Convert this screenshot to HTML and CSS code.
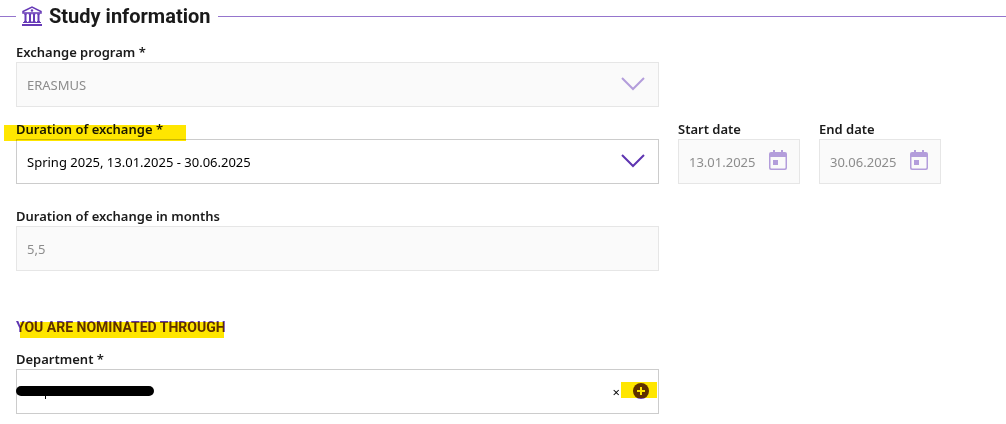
FILE: index.html
```html
<!DOCTYPE html>
<html lang="en">
<head>
    <meta charset="UTF-8">
    <meta name="viewport" content="width=device-width, initial-scale=1.0">
    <title>Study information</title>
    <link rel="stylesheet" href="styles.css">
</head>
<body>
    <header class="section-header">
        <svg class="section-icon" viewBox="0 0 20 20" aria-hidden="true">
            <path d="M1 5.500 10 1l9 4.500V7H1z" fill="none" stroke="currentColor" stroke-width="1.500"/>
            <circle cx="10" cy="4.500" r="1.200"/>
            <path d="M2 7.500h3v1h-.5V15H5v1H2v-1h.5V8.500H2zM6.500 7.500h3v1H9V15h.5v1h-3v-1H7V8.500h-.5zM10.500 7.500h3v1H13V15h.5v1h-3v-1h.5V8.500h-.5zM15 7.500h3v1h-.5V15h.5v1h-3v-1h.5V8.500H15z"/>
            <path d="M1 16h18v1H1zM0 18h20v2H0z"/>
        </svg>
        <h1>Study information</h1>
    </header>

    <form class="study-form">
        <div class="field program">
            <label for="program">Exchange program *</label>
            <div class="control disabled">
                <select id="program" disabled>
                    <option>ERASMUS</option>
                </select>
                <svg class="chevron" viewBox="0 0 24 14" aria-hidden="true"><path d="M1 1l11 11L23 1"/></svg>
            </div>
        </div>

        <div class="field duration">
            <label for="duration" class="marked marked-label">Duration of exchange *</label>
            <div class="control">
                <select id="duration">
                    <option>Spring 2025, 13.01.2025 - 30.06.2025</option>
                </select>
                <svg class="chevron" viewBox="0 0 24 14" aria-hidden="true"><path d="M1 1l11 11L23 1"/></svg>
            </div>
        </div>
        <div class="field">
            <label for="start-date">Start date</label>
            <div class="control disabled">
                <input type="text" id="start-date" class="date" value="13.01.2025" disabled>
                <button type="button" class="calendar" aria-label="Choose start date" disabled>
                    <svg viewBox="0 0 18 20" aria-hidden="true">
                        <path fill-rule="evenodd" d="M4 0h2v2h6V0h2v2h2a2 2 0 0 1 2 2v14a2 2 0 0 1-2 2H2a2 2 0 0 1-2-2V4a2 2 0 0 1 2-2h2zM1.500 7v10.500a1 1 0 0 0 1 1h13a1 1 0 0 0 1-1V7z"/>
                        <path d="M4 10h5v5H4z"/>
                    </svg>
                </button>
            </div>
        </div>
        <div class="field">
            <label for="end-date">End date</label>
            <div class="control disabled">
                <input type="text" id="end-date" class="date" value="30.06.2025" disabled>
                <button type="button" class="calendar" aria-label="Choose end date" disabled>
                    <svg viewBox="0 0 18 20" aria-hidden="true">
                        <path fill-rule="evenodd" d="M4 0h2v2h6V0h2v2h2a2 2 0 0 1 2 2v14a2 2 0 0 1-2 2H2a2 2 0 0 1-2-2V4a2 2 0 0 1 2-2h2zM1.500 7v10.500a1 1 0 0 0 1 1h13a1 1 0 0 0 1-1V7z"/>
                        <path d="M4 10h5v5H4z"/>
                    </svg>
                </button>
            </div>
        </div>

        <div class="field months">
            <label for="months">Duration of exchange in months</label>
            <div class="control disabled">
                <input type="text" id="months" value="5,5" disabled>
            </div>
        </div>

        <h2><span class="marked marked-heading">YOU ARE NOMINATED THROUGH</span></h2>

        <div class="field department">
            <label for="department">Department *</label>
            <div class="control">
                <input type="text" id="department">
                <span class="redacted"></span>
                <button type="button" class="clear" aria-label="Clear department">×</button>
                <button type="button" class="add marked marked-add" aria-label="Add department">
                    <svg viewBox="0 0 16 16" aria-hidden="true">
                        <circle cx="8" cy="8" r="8"/>
                        <path d="M8 4v8M4 8h8" stroke="#fff" stroke-width="2"/>
                    </svg>
                </button>
            </div>
        </div>
    </form>
</body>
</html>
```

FILE: styles.css
```css
* {
    box-sizing: border-box;
}
body {
    margin: 0;
    background-color: #fff;
    color: #1a1a1a;
    font-family: "Noto Sans", "Open Sans", sans-serif;
    font-size: 13px;
    line-height: 20px;
}
h1, h2 {
    margin: 0;
    font-family: Roboto, "Liberation Sans", sans-serif;
    font-weight: bold;
}
.section-header {
    display: flex;
    align-items: center;
    height: 32px;
}
.section-header::before,
.section-header::after {
    content: "";
    height: 1px;
    background-color: #9575cd;
}
.section-header::before {
    width: 16px;
    margin-right: 6px;
}
.section-header::after {
    flex: 1;
    margin-left: 8px;
}
.section-header h1 {
    margin-left: 7px;
    font-size: 20px;
}
.section-icon {
    width: 20px;
    height: 20px;
    color: #673ab7;
    fill: #673ab7;
}
.study-form {
    display: grid;
    grid-template-columns: minmax(0, 1fr) 122px 122px;
    column-gap: 19px;
    row-gap: 12px;
    padding: 10px 65px 10px 16px;
}
.program,
.duration,
.months,
.department,
.study-form h2 {
    grid-column: 1;
}
.months {
    margin-top: 10px;
}
.study-form h2 {
    margin-top: 34px;
    color: #5e35b1;
    font-size: 14px;
    line-height: 20px;
}
.field label {
    display: table;
    font-weight: 600;
}
.control {
    position: relative;
    display: flex;
    align-items: center;
    height: 45px;
    border: 1px solid #ccc;
}
.control.disabled {
    border-color: #e6e6e6;
    background-color: #fafafa;
}
input,
select {
    flex: 1;
    min-width: 0;
    height: 43px;
    padding: 0 10px;
    border: 0;
    background: none;
    color: #000;
    font: inherit;
    appearance: none;
}
input:disabled,
select:disabled {
    color: #8c8c8c;
    opacity: 1;
}
.date {
    padding-right: 0;
}
.chevron {
    position: absolute;
    top: 14px;
    right: 13px;
    width: 24px;
    height: 14px;
    fill: none;
    stroke: #5e35b1;
    stroke-width: 2;
    pointer-events: none;
}
select:disabled + .chevron {
    stroke: #b39ddb;
}
button {
    padding: 0;
    border: 0;
    background: none;
    font: inherit;
    cursor: pointer;
}
button svg {
    display: block;
}
.calendar {
    margin: 0 12px 4px 0;
}
.calendar svg {
    width: 18px;
    height: 20px;
    fill: #b39ddb;
}
.clear {
    margin-right: 13px;
    color: #000;
}
.add {
    margin: 0 9px 2px 0;
}
.add svg {
    width: 16px;
    height: 16px;
    fill: #5e35b1;
}
.redacted {
    position: absolute;
    top: 16px;
    left: -1px;
    width: 138px;
    height: 10px;
    border-radius: 5px;
    background-color: #000;
}
.redacted::after {
    content: "";
    position: absolute;
    top: 10px;
    left: 29px;
    width: 1px;
    height: 3px;
    background-color: #000;
}
/* highlighter marks */
.marked {
    position: relative;
}
.marked::after {
    content: "";
    position: absolute;
    z-index: 1;
    height: 16px;
    background-color: #ffe600;
    mix-blend-mode: multiply;
    pointer-events: none;
}
.marked-label::after {
    top: 6px;
    left: -12px;
    right: -23px;
}
.marked-heading::after {
    top: 3px;
    left: 4px;
    right: 2px;
}
.marked-add::after {
    top: -1px;
    left: -12px;
    right: -8px;
}
```
